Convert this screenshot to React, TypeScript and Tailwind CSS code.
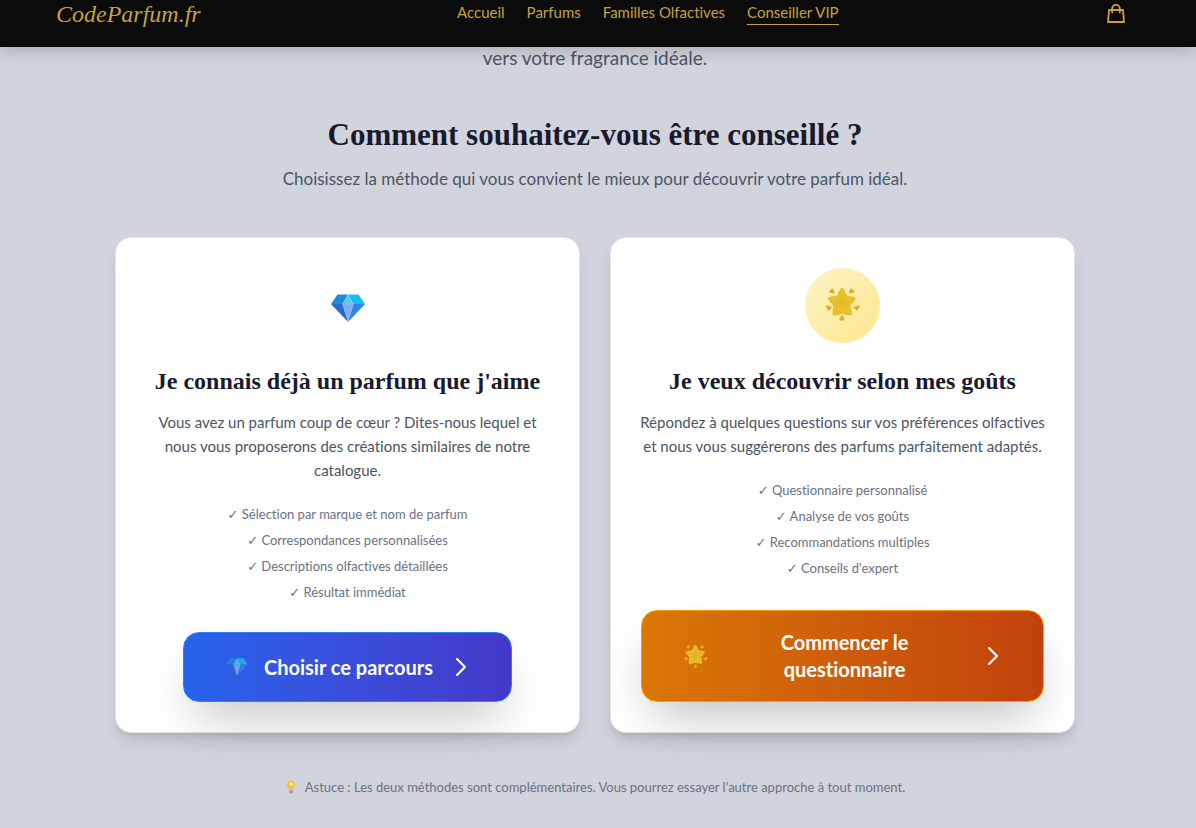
import type { ReactNode } from "react";

function Gem({ className }: { className: string }) {
  return (
    <svg viewBox="0 0 34 28" className={className} aria-hidden="true">
      <path d="M6.500 0.500H17L11.500 10H0Z" fill="#2288d8" />
      <path d="M17 0.500H27.500L34 10H22.500Z" fill="#18bdf5" />
      <path d="M17 0.500L11.500 10H22.500Z" fill="#42cdf3" />
      <path d="M0 10H11.500L17 28Z" fill="#2968d4" />
      <path d="M34 10H22.500L17 28Z" fill="#2b86e3" />
      <path d="M11.500 10H22.500L17 28Z" fill="#76a8f2" />
      <path d="M17 1L11.500 10L17 28L22.500 10Z" fill="#8fc4f8" opacity="0.35" />
    </svg>
  );
}

function Star({ className }: { className: string }) {
  return (
    <svg viewBox="0 0 34 34" className={className} aria-hidden="true">
      <defs>
        <radialGradient id="starFill">
          <stop offset="0" stopColor="#dfba1e" />
          <stop offset="1" stopColor="#f0c62e" />
        </radialGradient>
      </defs>
      <path
        d="M16 3L19.800 10.500L27.500 11.800L22.500 18L24 26.500L16 24.500L8.500 26.800L9.200 18L4 11.800L12.200 10.500Z"
        fill="url(#starFill)"
        stroke="#e8bf2c"
        strokeWidth="4"
        strokeLinejoin="round"
      />
      <g fill="#dfae28" stroke="#dfae28" strokeWidth="2" strokeLinejoin="round">
        <path d="M4 4.500L6.500 2.500L7.500 5.500Z" />
        <path d="M27.500 4.500L25 2.500L24 5.500Z" />
        <path d="M1 19.500L4.500 20.500L2.500 22.500Z" />
        <path d="M32.500 19.500L28.500 20.500L31 22.500Z" />
        <path d="M16 29.500L17.500 32.500H14.500Z" />
      </g>
    </svg>
  );
}

function Bulb() {
  return (
    <svg viewBox="0 0 12 15" className="h-[14px] w-3" aria-hidden="true">
      <path d="M6 0.500C3 0.500 1.500 2.600 1.500 5C1.500 7.500 3.500 8.500 3.800 11H8.200C8.500 8.500 10.500 7.500 10.500 5C10.500 2.600 9 0.500 6 0.500Z" fill="#fbbf45" />
      <circle cx="6.500" cy="4.500" r="2.200" fill="#ffe28a" />
      <path d="M4 11H8V13L7 14.500H5L4 13Z" fill="#a995b5" />
    </svg>
  );
}

function Chevron() {
  return (
    <svg viewBox="0 0 24 24" className="size-6 shrink-0" fill="none" stroke="currentColor" strokeWidth="2.200" strokeLinecap="round" strokeLinejoin="round" aria-hidden="true">
      <path d="M8 4L16 12L8 20" />
    </svg>
  );
}

const links = ["Accueil", "Parfums", "Familles Olfactives", "Conseiller VIP"];

function Header() {
  return (
    <header className="relative z-10 bg-[#0b0b0b] text-[#c9a136] shadow-[0_4px_16px_rgba(0,0,0,0.18)]">
      <div className="flex h-[47px] items-start justify-between pr-[59px] pl-14">
        <a href="#accueil" className="font-['Liberation_Serif',serif] text-2xl leading-7 italic">
          CodeParfum.fr
        </a>
        <nav className="flex gap-[22px] text-[15px] leading-6">
          {links.map((label, i) => (
            <a key={label} href="#" className={i === 3 ? "border-b border-[#c9a136]" : ""}>
              {label}
            </a>
          ))}
        </nav>
        <button type="button" aria-label="Panier" className="px-3 py-1">
          <svg viewBox="0 0 18 20" className="h-5 w-[18px]" fill="none" stroke="currentColor" strokeWidth="1.800" strokeLinejoin="round" aria-hidden="true">
            <path d="M2 6H16L17 18H1Z" />
            <path d="M5.200 8.500V4.500A3.800 3.800 0 0 1 12.800 4.500V8.500" strokeLinecap="round" />
          </svg>
        </button>
      </div>
    </header>
  );
}

type CardProps = {
  icon: ReactNode;
  title: string;
  text: ReactNode;
  points: string[];
  action: ReactNode;
};

function Card({ icon, title, text, points, action }: CardProps) {
  return (
    <section className="flex flex-col items-center rounded-2xl border border-gray-200 bg-white p-[30px] text-center shadow-[0_10px_15px_-3px_rgba(0,0,0,0.12),0_4px_6px_-4px_rgba(0,0,0,0.12)]">
      {icon}
      <h3 className="mt-[23px] font-['Liberation_Serif',serif] text-2xl leading-[30px] font-bold whitespace-nowrap text-[#1a1a2e]">{title}</h3>
      <p className="mt-3.5 text-[15px] leading-6 whitespace-nowrap text-gray-600">{text}</p>
      <ul className="mt-[22px] mb-[30px] space-y-1.5 text-[13px] leading-5 text-gray-500">
        {points.map((p) => (
          <li key={p}>✓ {p}</li>
        ))}
      </ul>
      {action}
    </section>
  );
}

export default function App() {
  return (
    <div className="min-h-screen bg-[#d1d4dc] font-[Lato,'DejaVu_Sans',sans-serif] [font-variant-ligatures:none]">
      <Header />
      <main className="pr-[30px] pb-7 pl-6 text-center">
        <p className="text-[19px] leading-[22px] text-gray-600">vers votre fragrance idéale.</p>
        <h2 className="mt-[46px] font-['Liberation_Serif',serif] text-[31px] leading-10 font-bold text-[#1a1a2e]">
          Comment souhaitez-vous être conseillé ?
        </h2>
        <p className="mt-2.5 text-[17px] leading-7 text-gray-600">
          Choisissez la méthode qui vous convient le mieux pour découvrir votre parfum idéal.
        </p>
        <div className="mx-auto mt-11 grid max-w-[960px] grid-cols-2 gap-[30px]">
          <Card
            icon={
              <div className="flex size-[75px] items-center justify-center pt-1">
                <Gem className="h-7 w-[34px]" />
              </div>
            }
            title="Je connais déjà un parfum que j'aime"
            text={
              <>
                Vous avez un parfum coup de cœur ? Dites-nous lequel et
                <br />
                nous vous proposerons des créations similaires de notre
                <br />
                catalogue.
              </>
            }
            points={["Sélection par marque et nom de parfum", "Correspondances personnalisées", "Descriptions olfactives détaillées", "Résultat immédiat"]}
            action={
              <button type="button" className="mt-auto flex h-[70px] items-center rounded-2xl border border-blue-500 bg-linear-to-r from-[#2563eb] to-[#4338ca] px-[38px] text-xl font-bold text-white shadow-2xl">
                <Gem className="mr-4 ml-1 h-[18px] w-[22px] opacity-80" />
                Choisir ce parcours
                <span className="ml-4">
                  <Chevron />
                </span>
              </button>
            }
          />
          <Card
            icon={
              <div className="flex size-[75px] items-center justify-center rounded-full bg-linear-to-br from-[#fef3c7] to-[#fde68a] pb-1">
                <Star className="size-[34px]" />
              </div>
            }
            title="Je veux découvrir selon mes goûts"
            text={
              <>
                Répondez à quelques questions sur vos préférences olfactives
                <br />
                et nous vous suggérerons des parfums parfaitement adaptés.
              </>
            }
            points={["Questionnaire personnalisé", "Analyse de vos goûts", "Recommandations multiples", "Conseils d'expert"]}
            action={
              <button type="button" className="mt-auto flex h-[92px] w-full items-center rounded-2xl border border-amber-500 bg-linear-to-r from-[#d97706] to-[#c2410c] px-[38px] text-xl leading-[27px] font-bold text-white shadow-2xl">
                <Star className="ml-1 size-6 shrink-0 opacity-90" />
                <span className="flex-1">
                  Commencer le
                  <br />
                  questionnaire
                </span>
                <Chevron />
              </button>
            }
          />
        </div>
        <p className="mt-11 flex items-center justify-center gap-2 text-[13px] leading-5 text-gray-500">
          <Bulb />
          Astuce : Les deux méthodes sont complémentaires. Vous pourrez essayer l'autre approche à tout moment.
        </p>
      </main>
    </div>
  );
}
